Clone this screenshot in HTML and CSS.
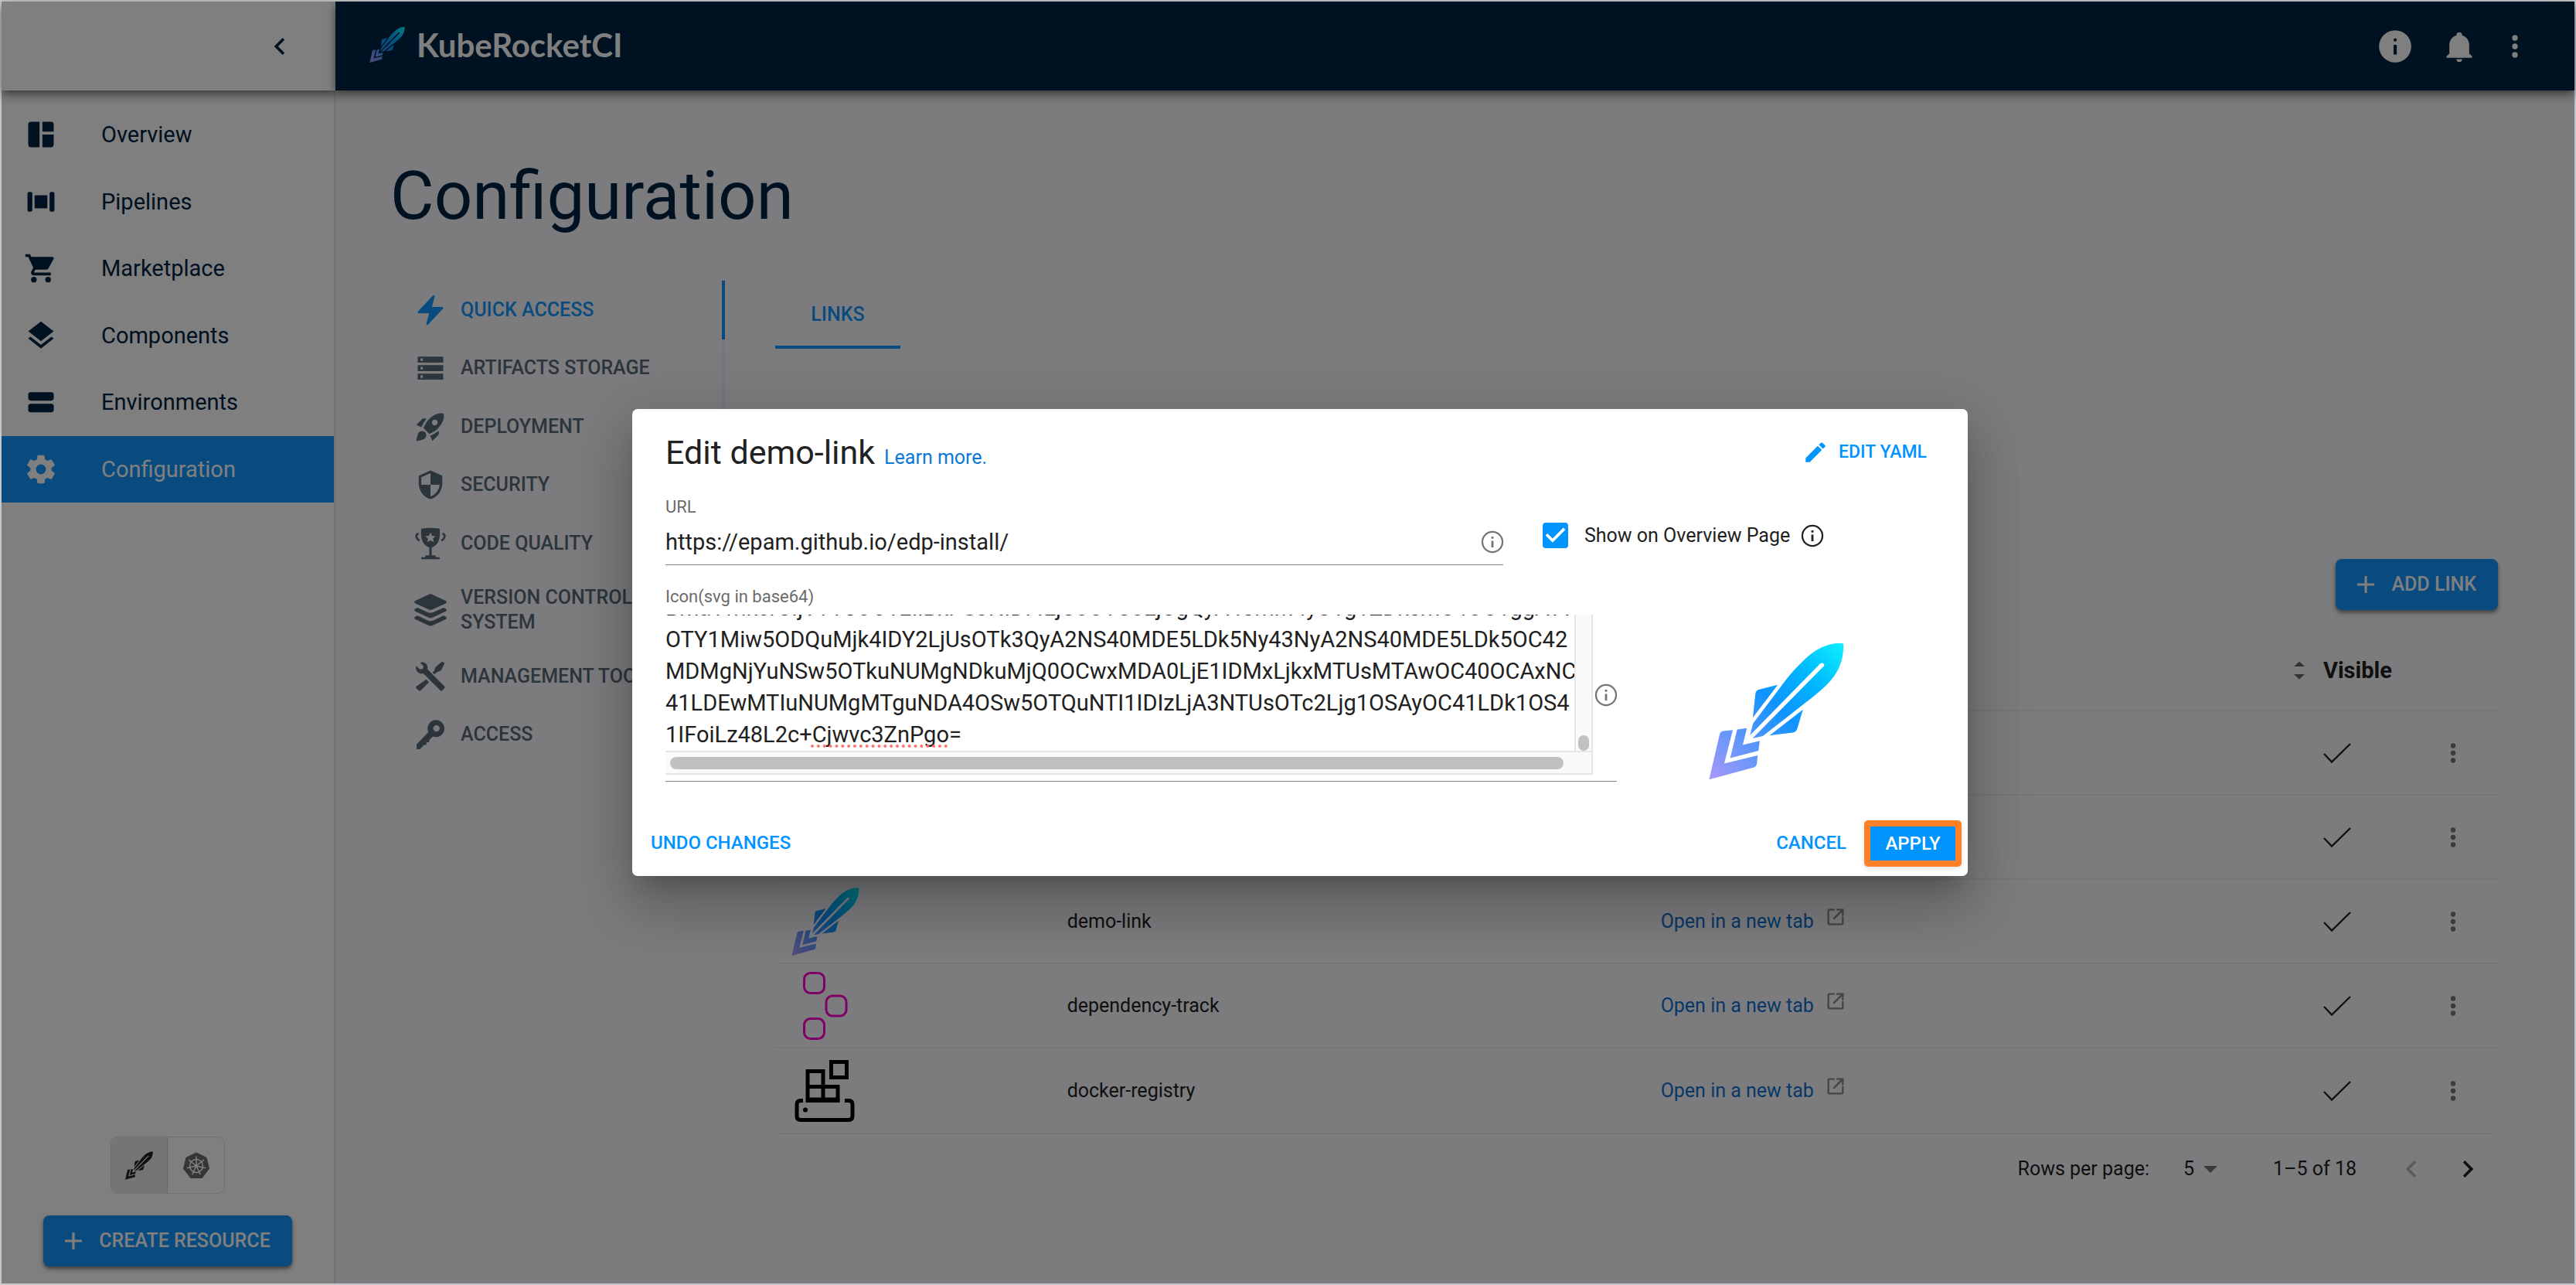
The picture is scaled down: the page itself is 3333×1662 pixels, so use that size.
FILE: index.html
```
<!DOCTYPE html>
<html lang="en">
<head>
<meta charset="utf-8">
<title>KubeRocketCI</title>
<link rel="stylesheet" href="styles.css">
</head>
<body>
<svg class="sprite" aria-hidden="true">
  <defs>
    <linearGradient id="rocket-gradient" gradientUnits="userSpaceOnUse" x1="62" y1="570" x2="586" y2="42">
      <stop offset="0" stop-color="#ab98f8"/>
      <stop offset=".3" stop-color="#5596fb"/>
      <stop offset=".52" stop-color="#0f93ff"/>
      <stop offset=".74" stop-color="#00b6ff"/>
      <stop offset="1" stop-color="#0cf0ff"/>
    </linearGradient>
    <symbol id="rocket" viewBox="62 40 526 530">
      <path d="M585 42C589 100 566 160 520 202C480 240 460 254 425 282L272 401L232 410L508 131Q513 126 509 120Q503 115 496 119L222 398L234 352L340 212C370 170 400 135 436 102C480 60 535 35 585 42Z"/>
      <path d="M330 202L258 220Q244 224 243 238L233 330ZM428 298L406 372Q402 386 388 388L298 399ZM172 376L210 370L194 436L260 420L255 458L145 487ZM155 378L118 382Q108 383 104 395L63 570L235 524Q248 520 249 508L252 476L122 508Z"/>
    </symbol>
    <symbol id="dots" viewBox="0 0 24 24"><path d="M12 8a2 2 0 1 0 0-4 2 2 0 0 0 0 4zm0 2a2 2 0 1 0 0 4 2 2 0 0 0 0-4zm0 6a2 2 0 1 0 0 4 2 2 0 0 0 0-4z"/></symbol>
    <symbol id="info" viewBox="0 0 24 24"><path d="M11 7h2v2h-2zm0 4h2v6h-2zm1-9a10 10 0 1 0 0 20 10 10 0 0 0 0-20zm0 18.4a8.4 8.4 0 1 1 0-16.8 8.4 8.4 0 0 1 0 16.8z"/></symbol>
    <symbol id="external" viewBox="0 0 24 24"><path d="M19 19H5V5h6V3H5a2 2 0 0 0-2 2v14a2 2 0 0 0 2 2h14a2 2 0 0 0 2-2v-7h-2v7zM13 3v2h4.600L9 13.600 10.400 15 19 6.400V11h2V3h-8z"/></symbol>
    <symbol id="plus" viewBox="0 0 24 24"><path d="M19 13h-6v6h-2v-6H5v-2h6V5h2v6h6z"/></symbol>
    <symbol id="check" viewBox="0 0 36 28"><path d="M1 15l10 10.500L35 2" fill="none" stroke="currentColor" stroke-width="2.400"/></symbol>
    <symbol id="chevron" viewBox="0 0 24 24"><path d="M15.410 16.580L10.830 12l4.580-4.590L14 6l-6 6 6 6z"/></symbol>
    <symbol id="chevron-right" viewBox="0 0 24 24"><path d="M8.590 16.580L13.170 12 8.590 7.410 10 6l6 6-6 6z"/></symbol>
  </defs>
</svg>

<div class="app">
  <div class="sidebar-head">
    <button class="icon-button" type="button" aria-label="Collapse sidebar"><svg class="icon"><use href="#chevron"/></svg></button>
  </div>
  <header class="topbar">
    <a class="brand" href="#"><svg class="brand-mark gradient"><use href="#rocket"/></svg>KubeRocketCI</a>
    <div class="topbar-actions">
      <button class="icon-button" type="button" aria-label="Info"><svg class="icon icon-lg" viewBox="0 0 24 24"><path d="M12 2a10 10 0 1 0 0 20 10 10 0 0 0 0-20zm1 15h-2v-6h2v6zm-1-8a1 1 0 1 1 0-2 1 1 0 0 1 0 2z"/></svg></button>
      <button class="icon-button bell" type="button" aria-label="Notifications"><svg class="icon" viewBox="0 0 24 24"><path d="M21 19v1H3v-1l2-2v-6c0-3.100 2.030-5.830 5-6.710V4a2 2 0 0 1 4 0v.29c2.970.88 5 3.610 5 6.710v6l2 2zm-7 2a2 2 0 0 1-4 0"/></svg></button>
      <button class="icon-button" type="button" aria-label="More"><svg class="icon"><use href="#dots"/></svg></button>
    </div>
  </header>

  <aside class="sidebar">
    <nav class="side-nav">
      <a href="#"><svg class="icon" viewBox="0 0 24 24"><path d="M5 3h6v18H5a2 2 0 0 1-2-2V5a2 2 0 0 1 2-2zM13 3h6a2 2 0 0 1 2 2v5h-8zM13 12h8v7a2 2 0 0 1-2 2h-6z"/></svg>Overview</a>
      <a href="#"><svg class="icon" viewBox="0 0 24 24"><rect x="2.500" y="5" width="3.400" height="14" rx="1.200"/><rect x="7.500" y="7.400" width="9" height="9.200"/><rect x="18.100" y="5" width="3.400" height="14" rx="1.200"/></svg>Pipelines</a>
      <a href="#"><svg class="icon" viewBox="0 0 24 24"><path d="M17 18a2 2 0 1 1 0 4 2 2 0 0 1 0-4M1 2h3.270l.94 2H20a1 1 0 0 1 1 1c0 .170-.050.340-.120.500l-3.580 6.470c-.340.610-1 1.030-1.750 1.030H8.100l-.9 1.630-.030.120a.250.250 0 0 0 .250.250H19v2H7a2 2 0 0 1-2-2c0-.350.090-.680.240-.960l1.360-2.450L3 4H1V2m6 16a2 2 0 1 1 0 4 2 2 0 0 1 0-4"/></svg>Marketplace</a>
      <a href="#"><svg class="icon" viewBox="0 0 24 24"><path d="M12 16l7.360-5.730L21 9l-9-7-9 7 1.630 1.270M12 18.540l-7.380-5.730L3 14.070l9 7 9-7-1.630-1.270z"/></svg>Components</a>
      <a href="#"><svg class="icon" viewBox="0 0 24 24"><rect x="3" y="5" width="18" height="6" rx="1.800"/><rect x="3" y="13.200" width="18" height="6" rx="1.800"/></svg>Environments</a>
      <a class="current" href="#" aria-current="page"><svg class="icon" viewBox="0 0 24 24"><path d="M12 15.500a3.500 3.500 0 1 1 0-7 3.500 3.500 0 0 1 0 7m7.430-2.530c.040-.320.070-.640.070-.970s-.030-.660-.070-1l2.110-1.630c.190-.150.240-.420.120-.640l-2-3.460c-.120-.220-.390-.310-.610-.220l-2.490 1c-.520-.390-1.060-.730-1.690-.980l-.370-2.650A.506.506 0 0 0 14 2h-4c-.250 0-.460.180-.5.420l-.370 2.650c-.630.250-1.170.590-1.690.980l-2.490-1c-.220-.090-.490 0-.610.220l-2 3.460c-.130.220-.070.490.120.640L4.570 11c-.040.340-.070.670-.070 1s.030.650.070.970l-2.110 1.660c-.190.150-.250.420-.120.640l2 3.460c.120.220.390.300.610.220l2.490-1.010c.520.400 1.060.740 1.690.990l.37 2.650c.040.240.250.420.5.420h4c.25 0 .46-.180.5-.420l.37-2.650c.63-.260 1.170-.590 1.690-.990l2.490 1.010c.220.080.490 0 .610-.220l2-3.460c.120-.220.070-.490-.120-.640z"/></svg>Configuration</a>
    </nav>
    <div class="side-foot">
      <div class="view-toggle" role="group" aria-label="View">
        <button class="selected" type="button" aria-label="KubeRocketCI view" aria-pressed="true"><svg class="toggle-icon"><use href="#rocket"/></svg></button>
        <button type="button" aria-label="Kubernetes view" aria-pressed="false"><svg class="toggle-icon" viewBox="0 0 36 36"><path class="hull" d="M18 1l13.500 6.500L35 22l-9.500 12.500h-15L1 22 4.500 7.500z"/><g class="wheel"><circle cx="18" cy="18.500" r="8.500"/><circle cx="18" cy="18.500" r="1.500"/><path d="M18 18.500V6M18 18.500l9.800-7.800M18 18.500l12.200 2.800M18 18.500l5.400 11.300M18 18.500l-5.400 11.300M18 18.500L5.800 21.300M18 18.500l-9.800-7.800"/></g></svg></button>
      </div>
      <button class="primary" type="button"><svg class="icon-sm"><use href="#plus"/></svg>CREATE RESOURCE</button>
    </div>
  </aside>

  <main class="page">
    <h1>Configuration</h1>
    <div class="settings">
      <nav class="tabs">
        <a class="active" href="#"><svg class="icon" viewBox="0 0 24 24"><path d="M14.615 1.595a.75.75 0 0 1 .359.852L12.982 9.750h7.268a.75.75 0 0 1 .548 1.262l-10.500 11.250a.75.75 0 0 1-1.272-.710l1.992-7.302H3.750a.75.75 0 0 1-.548-1.262l10.500-11.250a.75.75 0 0 1 .913-.143z"/></svg><span>QUICK ACCESS</span></a>
        <a href="#"><svg class="icon" viewBox="0 0 24 24"><path fill-rule="evenodd" d="M3 4h18v4.200H3zM5 5.200v1.800h1.600V5.200zM3 10h18v4.200H3zM5 11.200v1.800h1.600v-1.800zM3 16h18v4.200H3zM5 17.200v1.800h1.600v-1.800z"/></svg><span>ARTIFACTS STORAGE</span></a>
        <a href="#"><svg class="icon" viewBox="0 0 24 24"><path d="M9.190 6.350c-2.040 2.290-3.440 5.580-3.570 5.890L2 10.690l4.050-4.050c.470-.470 1.150-.680 1.810-.550l1.330.260zM11.170 17s3.740-1.550 5.890-3.700c5.400-5.400 4.500-9.620 4.210-10.570-.950-.300-5.170-1.190-10.570 4.210C8.550 9.090 7 12.830 7 12.830L11.170 17zm6.480-2.190c-2.290 2.040-5.580 3.440-5.890 3.570L13.310 22l4.050-4.050c.470-.470.680-1.150.550-1.810l-.260-1.330zM9 18c0 .83-.34 1.580-.88 2.120C6.940 21.300 2 22 2 22s.7-4.940 1.880-6.120A2.996 2.996 0 0 1 9 18zm4-9c0-1.100.9-2 2-2s2 .9 2 2-.9 2-2 2-2-.9-2-2z"/></svg><span>DEPLOYMENT</span></a>
        <a href="#"><svg class="icon" viewBox="-1 -1 26 26"><path d="M12 1L3 5v6c0 5.550 3.840 10.740 9 12 5.160-1.260 9-6.450 9-12V5l-9-4zm0 10.990h7c-.530 4.120-3.280 7.790-7 8.940V12H5V6.300l7-3.110v8.800z"/></svg><span>SECURITY</span></a>
        <a href="#"><svg class="icon" viewBox="0 0 24 24"><path fill-rule="evenodd" d="M5.500 1.500Q12 .4 18.500 1.500Q19.600 12.500 12.900 14.800V20.300H15.600V21.700H18.500V23.100H5.500V21.700H8.400V20.300H11.100V14.800Q4.400 12.500 5.500 1.500ZM12 4.200l-1.100 2.300-2.500.3 1.800 1.700-.5 2.500 2.300-1.200 2.300 1.200-.5-2.500 1.800-1.700-2.500-.3z"/><path d="M3.600 5Q1.400 5.500 2.200 7.600Q2.800 9.400 4.300 9.900M20.400 5Q22.600 5.500 21.800 7.600Q21.200 9.400 19.700 9.900" fill="none" stroke="currentColor" stroke-width="1.500"/></svg><span>CODE QUALITY</span></a>
        <a href="#"><svg class="icon" viewBox="-16 -16 544 544"><path d="M232.500 5.200c14.900-6.900 32.100-6.900 47 0l218.600 101c8.500 3.900 13.900 12.400 13.900 21.800s-5.400 17.900-13.900 21.800l-218.600 101c-14.900 6.900-32.100 6.900-47 0L13.900 149.800C5.400 145.800 0 137.300 0 128s5.400-17.900 13.900-21.800zM48.100 218.400l164.300 75.900c27.700 12.800 59.600 12.800 87.300 0l164.300-75.900 34.100 15.800c8.500 3.900 13.900 12.400 13.900 21.800s-5.400 17.900-13.900 21.800l-218.600 101c-14.900 6.900-32.100 6.900-47 0L13.900 277.800C5.400 273.800 0 265.300 0 256s5.400-17.900 13.900-21.800zM13.900 362.200l34.200-15.800 164.300 75.900c27.700 12.800 59.600 12.800 87.300 0l164.300-75.900 34.100 15.800c8.500 3.900 13.900 12.400 13.900 21.800s-5.400 17.900-13.900 21.800l-218.600 101c-14.900 6.900-32.100 6.900-47 0L13.900 405.800C5.400 401.800 0 393.300 0 384s5.400-17.900 13.900-21.800z"/></svg><span>VERSION CONTROL SYSTEM</span></a>
        <a href="#"><svg class="icon" viewBox="0 0 24 24"><path d="M4.600 2.200Q8 1 9.600 4.100Q10.200 5.400 9.800 6.800L21.900 19Q22.400 19.600 21.900 20.200L20.200 21.900Q19.600 22.400 19 21.900L6.900 9.800Q4.500 10.600 2.700 8.600Q1.200 6.800 2 4.500L4.500 6.900L6.700 6.400L7.100 4.600ZM22 2.600L19.500 7.600L16.200 9.200L14.800 10.600L13.400 9.200L14.800 7.800L15.300 5.600L19.600 1.900Q20.400 1.400 21.200 1.900ZM9 14L11 16L5 22Q4.300 22.500 3.700 22L2 20.300Q1.500 19.600 2 19Z"/></svg><span>MANAGEMENT TOOL</span></a>
        <a href="#"><svg class="icon" viewBox="0 0 24 24"><path fill-rule="evenodd" d="M16 1.800a6 6 0 1 1-2.300 11.600L11.200 15.800 11 17.600 9.200 17.500 9 19.400 7.200 19.300 6.600 20.300 4.500 22.300H2.200V18.900L10.500 10.300A6 6 0 0 1 16 1.800ZM16.200 5.400a2.300 2.300 0 1 0 0 4.600 2.300 2.300 0 0 0 0-4.600Z"/></svg><span>ACCESS</span></a>
      </nav>

      <section class="links">
        <div class="sub-tabs"><a href="#">LINKS</a></div>
        <div class="toolbar"><button class="primary" type="button"><svg class="icon-sm"><use href="#plus"/></svg>ADD LINK</button></div>
        <table>
          <colgroup><col class="col-icon"><col class="col-name"><col><col class="col-visible"><col class="col-menu"></colgroup>
          <thead>
            <tr><th></th><th></th><th class="sort"><svg class="sort-icon" viewBox="0 0 14 24"><path d="M0 7l7-6.500L14 7zM0 17l7 6.500 7-6.500z"/></svg></th><th>Visible</th><th></th></tr>
          </thead>
          <tbody>
            <tr><td></td><td></td><td></td><td><svg class="check"><use href="#check"/></svg></td><td class="menu"><button class="icon-button" type="button" aria-label="Actions"><svg class="icon-sm"><use href="#dots"/></svg></button></td></tr>
            <tr><td></td><td></td><td></td><td><svg class="check"><use href="#check"/></svg></td><td class="menu"><button class="icon-button" type="button" aria-label="Actions"><svg class="icon-sm"><use href="#dots"/></svg></button></td></tr>
            <tr><td><svg class="link-icon gradient"><use href="#rocket"/></svg></td><td>demo-link</td><td><a class="external" href="#">Open in a new tab<svg><use href="#external"/></svg></a></td><td><svg class="check"><use href="#check"/></svg></td><td class="menu"><button class="icon-button" type="button" aria-label="Actions"><svg class="icon-sm"><use href="#dots"/></svg></button></td></tr>
            <tr><td><svg class="link-icon" viewBox="0 0 88 88"><g class="track"><rect x="16.500" y="1.500" width="26" height="26" rx="8"/><rect x="45" y="31" width="26" height="26" rx="8"/><rect x="16.500" y="60.500" width="26" height="26" rx="8"/></g></svg></td><td>dependency-track</td><td><a class="external" href="#">Open in a new tab<svg><use href="#external"/></svg></a></td><td><svg class="check"><use href="#check"/></svg></td><td class="menu"><button class="icon-button" type="button" aria-label="Actions"><svg class="icon-sm"><use href="#dots"/></svg></button></td></tr>
            <tr><td><svg class="link-icon" viewBox="0 0 88 88"><g class="registry"><rect x="51.500" y="6.500" width="20" height="20"/><path d="M21 54.500V18.500h20v36M21 38.500h39V55H21"/><path d="M15 56.500h-3q-5 0-5 5v15q0 5 5 5h62q5 0 5-5V61.500q0-5-5-5h-5M18.500 56.500h44"/></g><circle cx="18" cy="68.500" r="3"/></svg></td><td>docker-registry</td><td><a class="external" href="#">Open in a new tab<svg><use href="#external"/></svg></a></td><td><svg class="check"><use href="#check"/></svg></td><td class="menu"><button class="icon-button" type="button" aria-label="Actions"><svg class="icon-sm"><use href="#dots"/></svg></button></td></tr>
          </tbody>
        </table>
        <div class="pagination">
          <label for="rows">Rows per page:</label>
          <select id="rows"><option>5</option></select>
          <span class="range">1–5 of 18</span>
          <button class="icon-button" type="button" aria-label="Previous page" disabled><svg class="icon"><use href="#chevron"/></svg></button>
          <button class="icon-button next" type="button" aria-label="Next page"><svg class="icon"><use href="#chevron-right"/></svg></button>
        </div>
      </section>
    </div>
  </main>

  <div class="backdrop">
    <form class="dialog" role="dialog" aria-labelledby="dialog-title">
      <header class="dialog-head">
        <h2 id="dialog-title">Edit demo-link</h2>
        <a href="#">Learn more.</a>
        <button class="text-button edit" type="button"><svg viewBox="0 0 24 24"><path d="M3 17.250V21h3.750L17.810 9.940l-3.750-3.750zM20.710 7.040a1 1 0 0 0 0-1.410l-2.340-2.340a1 1 0 0 0-1.410 0l-1.830 1.830 3.750 3.750z"/></svg>EDIT YAML</button>
      </header>
      <div class="row">
        <div class="field url-field">
          <label for="url">URL</label>
          <div class="field-line"><input id="url" type="text" value="https://epam.github.io/edp-install/"><svg class="info"><use href="#info"/></svg></div>
        </div>
        <div class="show">
          <input id="show" type="checkbox" checked>
          <label for="show">Show on Overview Page</label>
          <svg class="info"><use href="#info"/></svg>
        </div>
      </div>
      <div class="row">
        <div class="field icon-field">
          <label for="icon">Icon(svg in base64)</label>
          <div class="field-line">
            <div class="scroller">
              <div class="viewport">
                <textarea id="icon" rows="5" wrap="off" spellcheck="false">BmaTwikerCIjYTY5OC1EIiBkPSJNIDI4LjU3OTU3LjUgQyA4omM4yU1g1ZDksmC4OC1ggATWid
OTY1Miw5ODQuMjk4IDY2LjUsOTk3QyA2NS40MDE5LDk5Ny43NyA2NS40MDE5LDk5OC42
MDMgNjYuNSw5OTkuNUMgNDkuMjQ0OCwxMDA0LjE1IDMxLjkxMTUsMTAwOC40OCAxNC
41LDEwMTIuNUMgMTguNDA4OSw5OTQuNTI1IDIzLjA3NTUsOTc2Ljg1OSAyOC41LDk1OS4
1IFoiLz48L2c+Cjwvc3ZnPgo=</textarea>
                <span class="misspelling"></span>
              </div>
              <div class="track-y"><i></i></div>
              <div class="track-x"><i></i></div>
            </div>
            <svg class="info"><use href="#info"/></svg>
          </div>
        </div>
        <svg class="preview gradient"><use href="#rocket"/></svg>
      </div>
      <footer class="dialog-foot">
        <button class="text-button undo" type="reset">UNDO CHANGES</button>
        <button class="text-button" type="button">CANCEL</button>
        <button class="apply" type="submit">APPLY</button>
      </footer>
    </form>
  </div>
</div>
</body>
</html>
```
FILE: styles.css
```
:root {
  --blue: #1296ff;
  --ink: #002244;
}

* { box-sizing: border-box; }

body {
  margin: 0;
  padding: 2px;
  background: #c4c8ca;
  color: #212121;
  font: 25px/32px Roboto, "Liberation Sans", sans-serif;
}

a { color: inherit; text-decoration: none; }
button, input, textarea, select { font: inherit; color: inherit; margin: 0; padding: 0; border: 0; background: none; }
h1, h2 { margin: 0; font-weight: 400; }
svg { display: block; flex: none; fill: currentColor; }

.sprite { position: absolute; width: 0; height: 0; }
.gradient { fill: url(#rocket-gradient); }
.icon { width: 44px; height: 44px; }
.icon-lg { width: 50px; height: 50px; }
.icon-sm { width: 38px; height: 38px; }
.icon-button { display: block; }

.app {
  position: relative;
  display: grid;
  grid-template: 115px 1fr / 432px 1fr;
  min-height: calc(100vh - 4px);
  background: #f9f9fc;
}

/* Header */
.sidebar-head, .topbar {
  display: flex;
  align-items: center;
  z-index: 1;
  box-shadow: 0 4px 9px -2px rgba(0,0,0,.4), 0 9px 11px rgba(0,0,0,.2), 0 2px 22px rgba(0,0,0,.14);
}
.sidebar-head { justify-content: flex-end; padding-right: 50px; background: #fff; color: var(--ink); }
.topbar { justify-content: space-between; padding: 0 55px 0 43px; background: var(--ink); color: #fff; }
.brand { display: flex; align-items: center; gap: 14px; padding-bottom: 3px; font: 700 42px/60px Lato, sans-serif; }
.brand-mark { width: 48px; height: 46px; }
.topbar-actions { display: flex; align-items: center; gap: 28px; }
.bell { margin-left: 8px; }

/* Sidebar */
.sidebar {
  display: flex;
  flex-direction: column;
  justify-content: space-between;
  padding: 14px 0 22px;
  background: #fff;
  border-right: 2px solid #e8e8ee;
  color: var(--ink);
  font-size: 29px;
}
.side-nav { display: grid; grid-auto-rows: 1fr; height: 519px; }
.side-nav a { display: flex; align-items: center; gap: 56px; padding-left: 29px; }
.side-nav .current { background: var(--blue); color: #fff; }
.side-foot { display: flex; flex-direction: column; align-items: center; gap: 28px; }
.view-toggle { display: flex; border: 1px solid rgba(0,0,0,.12); border-radius: 9px; overflow: hidden; color: #000; }
.view-toggle button { display: grid; place-items: center; width: 73px; height: 72px; }
.view-toggle .selected { background: #ebebeb; border-right: 1px solid rgba(0,0,0,.12); color: #222; }
.toggle-icon { width: 36px; height: 37px; }
.hull { fill: #6a6a6a; }
.wheel { fill: none; stroke: #fff; stroke-width: 1.500; }

.primary {
  display: flex;
  align-items: center;
  gap: 14px;
  height: 66px;
  padding: 0 28px 0 20px;
  border-radius: 8px;
  background: var(--blue);
  color: #fff;
  font-weight: 500;
  font-size: 25px;
  box-shadow: 0 3px 4px rgba(0,0,0,.4), 0 4px 10px rgba(0,0,0,.14);
}

/* Page */
.page { padding: 85px 99px 0 71px; color: #212121; }
h1 { margin-bottom: 59px; color: var(--ink); font-size: 87px; line-height: 102px; }
.settings { display: grid; grid-template-columns: 433px minmax(0, 1fr); gap: 65px; align-items: start; }

.tabs {
  display: grid;
  grid-template-rows: repeat(5, 1fr) 96px repeat(2, 1fr);
  height: 625px;
  border-right: 4px solid #eaeaf6;
  color: #596a78;
  font-weight: 500;
}
.tabs a { display: flex; align-items: center; gap: 17px; margin-right: -4px; padding-left: 30px; }
.tabs span { max-width: 260px; }
.tabs .active { border-right: 4px solid var(--blue); color: var(--blue); }

.sub-tabs { display: flex; margin-bottom: 272px; color: var(--blue); font-weight: 500; }
.sub-tabs a { width: 162px; padding-top: 4px; border-bottom: 4px solid; text-align: center; line-height: 80px; }
.toolbar { display: flex; justify-content: flex-end; margin-bottom: 26px; }

table { width: 100%; border-collapse: separate; border-spacing: 0; table-layout: fixed; }
.col-icon { width: 16%; }
.col-name { width: 768px; }
.col-visible { width: 130px; }
.col-menu { width: 117px; }
th, td { height: 109px; padding: 0 21px; border-bottom: 2px solid #ececee; text-align: left; vertical-align: middle; }
th { height: 105px; font-size: 29px; font-weight: 700; }
th.sort { padding-right: 3px; }
.sort-icon { width: 14px; height: 24px; margin-left: auto; color: #666; }
tbody tr:last-child td { border-bottom: 0; }
.link-icon { width: 88px; height: 88px; fill: #000; }
.link-icon.gradient { fill: url(#rocket-gradient); }
.track { fill: none; stroke: #ff00cc; stroke-width: 3; }
.registry { fill: none; stroke: #000; stroke-width: 5; }
.check { width: 36px; height: 28px; }
.menu .icon-button { margin: 0 auto; color: #757575; }
.external { display: flex; gap: 14px; color: #1070ce; }
.external svg { width: 28px; height: 28px; margin-top: -4px; color: #8a8a8a; }

.pagination {
  display: flex;
  align-items: center;
  height: 92px;
  margin: 0 6px;
  padding-right: 11px;
  justify-content: flex-end;
  border-top: 2px solid #ececee;
}
.pagination select {
  width: 46px;
  margin: 0 70px 0 44px;
  appearance: none;
  background: url('data:image/svg+xml,<svg xmlns="http://www.w3.org/2000/svg" viewBox="0 0 18 9"><path fill="%23757575" d="M0 0h18L9 9z"/></svg>') right 2px center / 18px 9px no-repeat;
}
.range { margin-right: 49px; }
.pagination button:disabled { color: #b8b8bb; }
.pagination .next { margin-left: 29px; }

/* Dialog */
.backdrop {
  position: absolute;
  inset: 0;
  z-index: 2;
  display: grid;
  place-items: center;
  padding-left: 31px;
  background: rgba(0,0,0,.5);
}
.dialog {
  width: 52%;
  min-width: 1728px;
  padding: 26px 0 11px;
  border-radius: 7px;
  background: #fff;
  box-shadow: 0 20px 27px -13px rgba(0,0,0,.2), 0 43px 68px 5px rgba(0,0,0,.14), 0 16px 83px 14px rgba(0,0,0,.12);
}
.dialog-head { display: flex; align-items: baseline; gap: 12px; padding: 0 53px 0 43px; margin-bottom: 29px; }
.dialog-head a { color: #0b78d8; }
h2 { font-size: 43px; line-height: 60px; }
.text-button { color: #0094ff; font-size: 24px; font-weight: 500; }
.edit { display: flex; align-items: center; align-self: center; gap: 13px; margin-left: auto; font-size: 23px; }
.edit svg { width: 34px; height: 34px; }

.row { display: flex; padding-left: 43px; margin-bottom: 29px; }
.field label { display: block; color: #6b6b6b; font-size: 22px; line-height: 24px; }
.field-line { display: flex; align-items: center; border-bottom: 1px solid #8a8a8a; }
.info { width: 34px; height: 34px; }
.field .info { margin-right: -3px; color: #757575; }
.url-field { width: 1084px; }
.url-field .field-line { height: 63px; padding-top: 4px; }
.url-field input { flex: 1; min-width: 0; font-size: 29px; line-height: 41px; }

.show { display: flex; align-items: center; align-self: center; gap: 21px; margin: 10px 0 0 51px; }
.show .info { margin-left: -9px; }
.show input {
  width: 33px;
  height: 33px;
  appearance: none;
  border-radius: 4px;
  background: #0094ff url('data:image/svg+xml,<svg xmlns="http://www.w3.org/2000/svg" viewBox="3 3 18 18"><path fill="white" d="M10 17 5 12 6.410 10.590 10 14.170 17.590 6.580 19 8z"/></svg>') center / 33px 33px;
}

.icon-field { width: 1231px; }
.icon-field .field-line { margin-top: 11px; padding-bottom: 8px; }
.scroller { display: grid; grid-template: 176px 31px / 1fr 24px; width: 1200px; }
.viewport { position: relative; display: flex; align-items: flex-end; overflow: hidden; }
textarea { display: block; width: 100%; height: 205px; flex: none; resize: none; overflow: hidden; font-size: 29px; line-height: 41px; }
.misspelling { position: absolute; left: 188px; bottom: 4px; width: 177px; border-bottom: 4px dotted #ff7368; }
.track-y { display: flex; align-items: flex-end; padding: 0 3px; border: solid #e6e6e6; border-width: 0 2px; background: #fafafa; }
.track-y i { width: 14px; height: 20px; border-radius: 7px; background: #c1c1c1; }
.track-x { grid-column: 1 / 3; padding: 6px 36px 6px 6px; border: solid #e6e6e6; border-width: 2px 2px 2px 0; background: #fafafa; }
.track-x i { display: block; height: 16px; border-radius: 8px; background: #c1c1c1; }
.preview { width: 175px; height: 178px; margin: 71px 0 0 119px; }

.dialog-foot { display: flex; align-items: center; gap: 23px; padding: 0 8px 0 24px; margin-top: 49px; }
.dialog-foot .undo { margin-right: auto; }
.dialog-foot .text-button { line-height: 60px; margin-bottom: 2px; }
.apply {
  height: 60px;
  width: 126px;
  border: 8px solid #ff8026;
  border-radius: 5px;
  background: #0094ff;
  color: #fff;
  font-size: 24px;
  font-weight: 500;
  line-height: 40px;
  box-shadow: 0 2px 6px rgba(0,0,0,.12);
}
```
